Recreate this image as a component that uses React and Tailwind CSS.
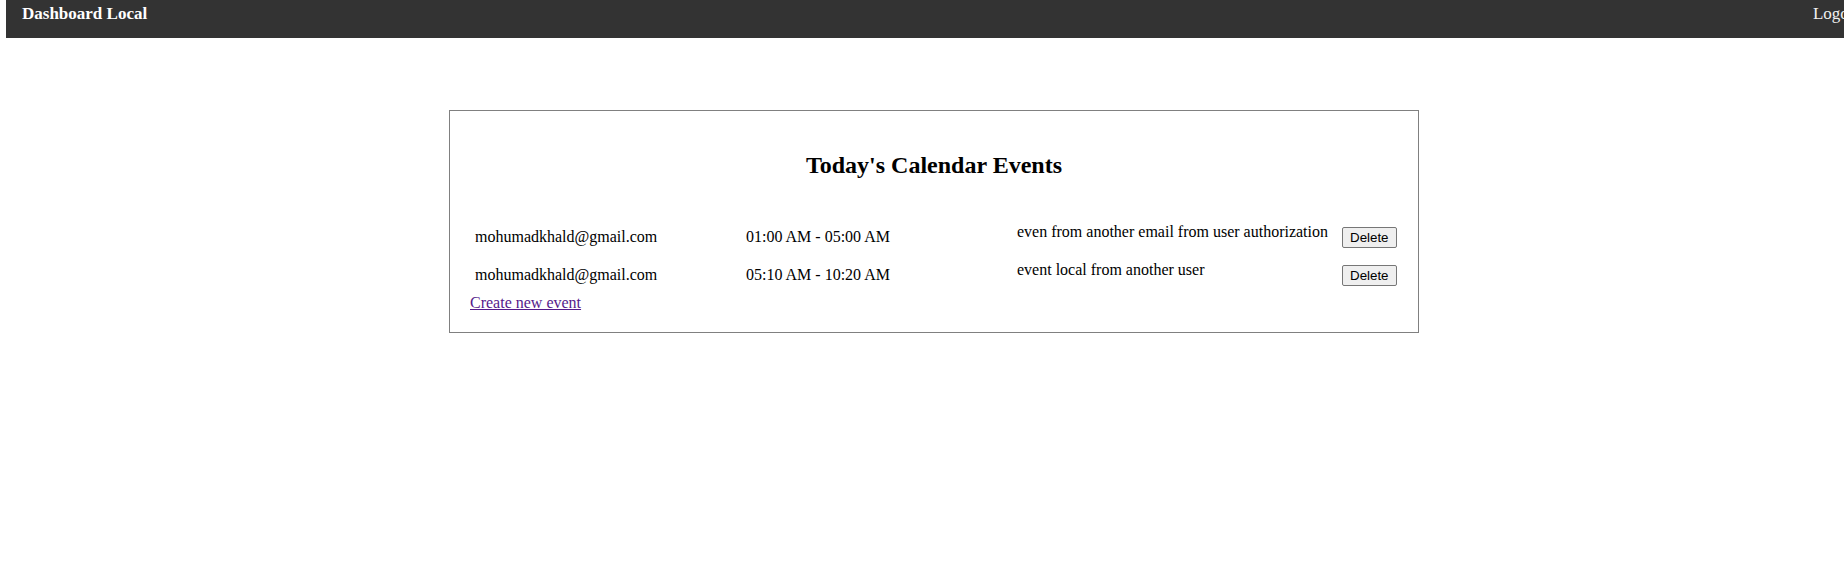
import React from 'react';

const events = [
    { email: 'mohumadkhald@gmail.com', time: '01:00 AM - 05:00 AM', desc: 'even from another email from user authorization' },
    { email: 'mohumadkhald@gmail.com', time: '05:10 AM - 10:20 AM', desc: 'event local from another user' },
];

const EventRow = ({ email, time, desc }) => (
    <div className="grid grid-cols-[276px_271px_325px_1fr] items-center h-[38px] text-[16px] leading-[18px]">
        <span className="pl-[5px]">{email}</span>
        <span>{time}</span>
        <span className="pb-[10px]">{desc}</span>
        <button className="justify-self-start h-[21px] px-[7px] bg-[#efefef] border border-[#767676] rounded-[2px] text-[13.33px] leading-[15px] text-black font-['Liberation_Sans',Arial,sans-serif]">
            Delete
        </button>
    </div>
);

export default function App() {
    return (
        <div className="min-h-screen w-full overflow-hidden bg-white text-black font-['Liberation_Serif','Times_New_Roman',serif]">
            {/* top bar runs past the right edge, like the original */}
            <header className="ml-[6px] w-[1872px] h-[38px] bg-[#333333] flex justify-between items-start pt-[4px] px-[16px] text-white text-[17px] leading-[19px]">
                <span className="font-bold">Dashboard Local</span>
                <span className="text-[#f0f0f0]">Logout</span>
            </header>

            <div className="pl-[24px]">
                <div className="mx-auto mt-[72px] w-[970px] border border-[#808080] p-[20px]">
                    <h2 className="mt-[20px] text-center text-[24px] leading-[28px] font-bold">Today's Calendar Events</h2>
                    <div className="mt-[39px]">
                        {events.map((ev, i) => (
                            <EventRow key={i} {...ev} />
                        ))}
                    </div>
                    <a href="#" className="block w-fit text-[16px] leading-[18px] text-[#551a8b] underline">Create new event</a>
                </div>
            </div>
        </div>
    );
}
